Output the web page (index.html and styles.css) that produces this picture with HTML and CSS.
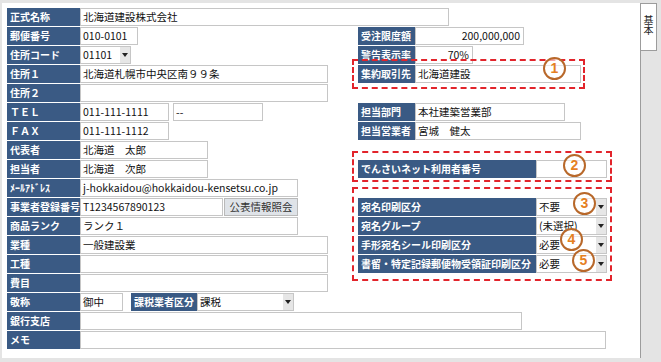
FILE: index.html
```html
<!DOCTYPE html>
<html lang="ja">
<head>
    <meta charset="UTF-8">
    <title>取引先登録</title>
    <link rel="stylesheet" href="styles.css">
</head>
<body>
    <div class="screen">
        <div class="panel">
            <div class="row">
                <div class="lbl">正式名称</div>
                <div class="fld w369">北海道建設株式会社</div>
            </div>

            <div class="middle">
                <div class="left">
                    <div class="row">
                        <div class="lbl">郵便番号</div>
                        <div class="fld w58">010-0101</div>
                    </div>
                    <div class="row">
                        <div class="lbl">住所コード</div>
                        <div class="fld sel w51"><span>01101</span><span class="arr"></span></div>
                    </div>
                    <div class="row">
                        <div class="lbl">住所１</div>
                        <div class="fld w248">北海道札幌市中央区南９９条</div>
                    </div>
                    <div class="row">
                        <div class="lbl">住所２</div>
                        <div class="fld w248"></div>
                    </div>
                    <div class="row">
                        <div class="lbl">ＴＥＬ</div>
                        <div class="fld w89">011-111-1111</div>
                        <div class="fld w90 ml4">--</div>
                    </div>
                    <div class="row">
                        <div class="lbl">ＦＡＸ</div>
                        <div class="fld w89">011-111-1112</div>
                    </div>
                    <div class="row">
                        <div class="lbl">代表者</div>
                        <div class="fld w128">北海道　太郎</div>
                    </div>
                    <div class="row">
                        <div class="lbl">担当者</div>
                        <div class="fld w128">北海道　次郎</div>
                    </div>
                    <div class="row">
                        <div class="lbl">ﾒｰﾙｱﾄﾞﾚｽ</div>
                        <div class="fld w218">j-hokkaidou@hokkaidou-kensetsu.co.jp</div>
                    </div>
                    <div class="row">
                        <div class="lbl">事業者登録番号</div>
                        <div class="fld w143">T1234567890123</div>
                        <button class="btn" type="button">公表情報照会</button>
                    </div>
                    <div class="row">
                        <div class="lbl">商品ランク</div>
                        <div class="fld w218">ランク１</div>
                    </div>
                    <div class="row">
                        <div class="lbl">業種</div>
                        <div class="fld w248">一般建設業</div>
                    </div>
                    <div class="row">
                        <div class="lbl">工種</div>
                        <div class="fld w248"></div>
                    </div>
                    <div class="row">
                        <div class="lbl">費目</div>
                        <div class="fld w248"></div>
                    </div>
                    <div class="row">
                        <div class="lbl">敬称</div>
                        <div class="fld w43">御中</div>
                        <div class="lbl tax">課税業者区分</div>
                        <div class="fld sel w97"><span>課税</span><span class="arr"></span></div>
                    </div>
                </div>

                <div class="right">
                    <div class="row">
                        <div class="lbl short">受注限度額</div>
                        <div class="fld num-r w109">200,000,000</div>
                    </div>
                    <div class="row">
                        <div class="lbl short">警告表示率</div>
                        <div class="fld num-r w58">70%</div>
                    </div>
                    <div class="row mark mark1">
                        <div class="lbl short">集約取引先</div>
                        <div class="fld w166">北海道建設</div>
                        <span class="num c1">1</span>
                    </div>
                    <div class="row"></div>
                    <div class="row">
                        <div class="lbl short">担当部門</div>
                        <div class="fld w150">本社建築営業部</div>
                    </div>
                    <div class="row">
                        <div class="lbl short">担当営業者</div>
                        <div class="fld w166">宮城　健太</div>
                    </div>
                    <div class="row"></div>
                    <div class="row mark mark2">
                        <div class="lbl long">でんさいネット利用者番号</div>
                        <div class="fld w71"></div>
                        <span class="num c2">2</span>
                    </div>
                    <div class="row"></div>
                    <div class="mark mark3">
                        <div class="row">
                            <div class="lbl long">宛名印刷区分</div>
                            <div class="fld sel w71"><span>不要</span><span class="arr"></span></div>
                            <span class="num c3">3</span>
                        </div>
                        <div class="row">
                            <div class="lbl long">宛名グループ</div>
                            <div class="fld sel w71"><span>(未選択)</span><span class="arr"></span></div>
                        </div>
                        <div class="row">
                            <div class="lbl long">手形宛名シール印刷区分</div>
                            <div class="fld sel w71"><span>必要</span><span class="arr"></span></div>
                            <span class="num c4">4</span>
                        </div>
                        <div class="row">
                            <div class="lbl long">書留・特定記録郵便物受領証印刷区分</div>
                            <div class="fld sel w71"><span>必要</span><span class="arr"></span></div>
                            <span class="num c5">5</span>
                        </div>
                    </div>
                </div>
            </div>

            <div class="row">
                <div class="lbl">銀行支店</div>
                <div class="fld w442"></div>
            </div>
            <div class="row">
                <div class="lbl">メモ</div>
                <div class="fld w526"></div>
            </div>
        </div>
        <div class="tab">基本</div>
    </div>
</body>
</html>
```

FILE: styles.css
```css
body {
    margin: 0;
    background-color: #e4e4e4;
    font-family: "Noto Sans CJK JP", "Noto Sans", sans-serif;
    color: #111;
}

.screen {
    display: flex;
    align-items: flex-start;
    padding: 3px 0 0 2px;
}

.panel {
    width: 639px;
    height: 355px;
    box-sizing: border-box;
    padding: 5px 0 0 5px;
    background-color: #fff;
    border-right: 1px solid #9c9c9c;
}

.tab {
    width: 16px;
    height: 48px;
    box-sizing: border-box;
    border: 1px solid #9c9c9c;
    border-left: none;
    background-color: #fff;
    writing-mode: vertical-rl;
    font-size: 10px;
    line-height: 16px;
    padding-top: 11px;
    color: #222;
}

.row {
    display: flex;
    align-items: flex-start;
    height: 19px;
    position: relative;
}

.middle {
    display: flex;
}

.left {
    width: 351px;
}

.right {
    width: 250px;
}

.lbl {
    flex: none;
    width: 73px;
    height: 18px;
    box-sizing: border-box;
    padding-left: 3px;
    background-color: #3a5a84;
    color: #fff;
    font-size: 10px;
    font-weight: bold;
    line-height: 18px;
    white-space: nowrap;
    overflow: hidden;
}

.lbl.short {
    width: 57px;
}

.lbl.long {
    width: 178px;
}

.lbl.tax {
    width: 66px;
    margin-left: 8px;
}

.fld {
    flex: none;
    height: 18px;
    box-sizing: border-box;
    padding: 0 2px;
    border: 1px solid #c6c6c6;
    background-color: #fff;
    font-size: 10.5px;
    line-height: 16px;
    white-space: nowrap;
    overflow: hidden;
}

.num-r {
    text-align: right;
    padding-right: 3px;
}

.sel {
    display: flex;
    justify-content: space-between;
    padding-right: 0;
}

.arr {
    width: 10px;
    height: 16px;
    background-color: #e6e6e6;
    position: relative;
}

.arr::after {
    content: "";
    position: absolute;
    left: 2px;
    top: 6px;
    border-top: 4px solid #222;
    border-left: 3px solid transparent;
    border-right: 3px solid transparent;
}

.btn {
    flex: none;
    width: 74px;
    height: 18px;
    margin-left: 1px;
    padding: 0;
    border: 1px solid #b9b9b9;
    background-color: #dfe3e8;
    color: #333;
    font-family: inherit;
    font-size: 10.5px;
    line-height: 16px;
}

.ml4 { margin-left: 4px; }
.w43 { width: 43px; }
.w51 { width: 51px; }
.w58 { width: 58px; }
.w71 { width: 71px; }
.w89 { width: 89px; }
.w90 { width: 90px; }
.w97 { width: 97px; }
.w109 { width: 109px; }
.w128 { width: 128px; }
.w143 { width: 143px; }
.w150 { width: 150px; }
.w166 { width: 166px; }
.w218 { width: 218px; }
.w248 { width: 248px; }
.w369 { width: 369px; }
.w442 { width: 442px; }
.w526 { width: 526px; }

/* annotation overlays */
.mark {
    position: relative;
}

.mark::after {
    content: "";
    position: absolute;
    left: -6px;
    box-sizing: border-box;
    border: 2px dashed #e2242b;
    pointer-events: none;
}

.mark1::after {
    top: -6px;
    width: 233px;
    height: 30px;
}

.mark2::after {
    top: -9px;
    width: 260px;
    height: 31px;
}

.mark3::after {
    top: -11px;
    width: 260px;
    height: 94px;
}

.num {
    position: absolute;
    width: 23px;
    height: 23px;
    box-sizing: border-box;
    border: 2px solid #b8682a;
    border-radius: 50%;
    background-color: rgba(255, 255, 255, 0.6);
    color: #e5801f;
    font-family: "Liberation Sans", Arial, sans-serif;
    font-size: 14px;
    font-weight: bold;
    line-height: 19px;
    text-align: center;
    z-index: 2;
}

.c1 { left: 185px; top: -8px; }
.c2 { left: 205px; top: -6px; }
.c3 { left: 215px; top: -6px; }
.c4 { left: 202px; top: -8px; }
.c5 { left: 214px; top: -6px; }
```
